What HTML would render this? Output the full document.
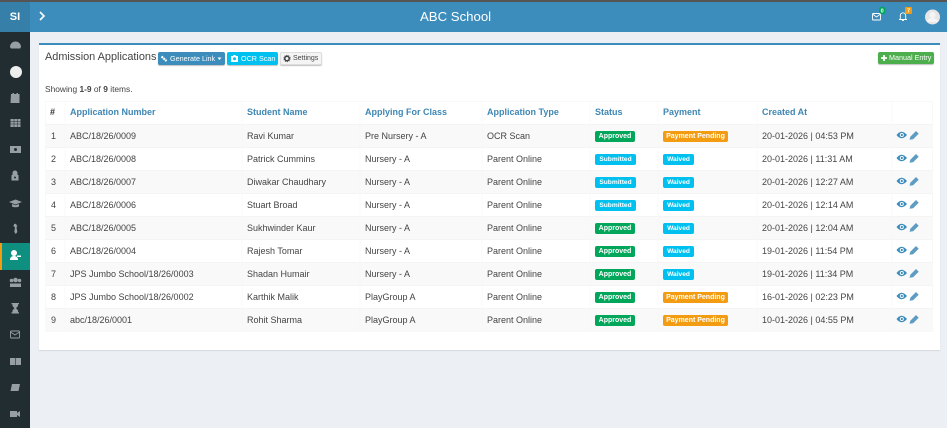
<!DOCTYPE html>
<html><head><meta charset="utf-8"><style>
*{box-sizing:border-box}
html,body{margin:0;padding:0;width:947px;height:428px;overflow:hidden;background:#ecf0f5;font-family:"Liberation Sans",sans-serif;color:#333}
#wrap{position:absolute;left:0;top:0;width:947px;height:428px;filter:blur(.3px)}
.abs{position:absolute}
#top{left:0;top:0;width:947px;height:2px;background:#555}
#logo{left:0;top:2px;width:30px;height:30px;background:#367fa9;color:#fff;font-weight:bold;font-size:11px;text-align:center;line-height:30px}
#hdr{left:30px;top:2px;width:917px;height:30px;background:#3c8dbc}
#title{left:420px;top:2px;color:#fff;font-size:13.2px;line-height:30px;white-space:nowrap}
#side{left:0;top:32px;width:30px;height:396px;background:#222d32}
#act{left:0;top:243px;width:30px;height:27px;background:#0e8f80;border-left:2px solid #f39c12}
#box{left:39px;top:43px;width:901px;height:307px;background:#fff;border-top:2px solid #3c8dbc;box-shadow:0 1px 1px rgba(0,0,0,.1)}
.t{position:absolute;white-space:nowrap}
.btn{position:absolute;top:52px;height:13px;border-radius:2px;color:#fff;box-shadow:0 1px 1px rgba(0,0,0,.25)}
.btn span{position:absolute;top:0;font-size:7.2px;line-height:13px;white-space:nowrap}
.btn svg{position:absolute;left:0;top:0}
.row{position:absolute;left:45px;width:888px;height:23px;border-top:1px solid #f4f4f4}
.row.o{background:#f9f9f9}
.c{position:absolute;top:0;font-size:9px;line-height:22px;white-space:nowrap;color:#444}
.h{position:absolute;top:107px;font-size:9px;font-weight:bold;color:#3f87b3;white-space:nowrap;line-height:11px}
.b{position:absolute;top:6px;height:11px;border-radius:2px;color:#fff;font-size:6.6px;font-weight:bold;text-align:center;line-height:11px;white-space:nowrap}
.g{background:#00a65a;left:550px;width:40px;font-size:7px}
.s{background:#00c0ef;left:550px;width:41px}
.w{background:#00c0ef;left:618px;width:31px}
.p{background:#f39c12;left:618px;width:65px;font-size:7px}
</style></head><body><div id="wrap">
<div class="abs" id="hdr"></div><div class="abs" id="top"></div>
<div class="abs" id="logo">SI</div>
<svg class="abs" style="left:38px;top:11px" width="8" height="10" viewBox="0 0 8 10"><path d="M2 1l4 4-4 4" fill="none" stroke="#fff" stroke-width="1.6"/></svg>
<div class="abs" id="title">ABC School</div>
<svg class="abs" style="left:860px;top:0" width="87" height="32" viewBox="860 0 87 32">
<rect x="872.500" y="13.500" width="8" height="6.500" rx=".8" fill="none" stroke="#fff" stroke-width=".9"/><path d="M872.500 14l4 3 4-3" fill="none" stroke="#fff" stroke-width=".8"/>
<rect x="879" y="7" width="6.500" height="7" rx="2.500" fill="#00a65a"/><text x="882.200" y="12.500" font-size="5.500" font-weight="bold" fill="#fff" text-anchor="middle" font-family="Liberation Sans">0</text>
<path d="M899 19.500h8M900.300 19V15.500a2.700 2.700 0 0 1 5.400 0V19M902 20.500h2" fill="none" stroke="#fff" stroke-width=".9"/>
<rect x="905" y="7" width="7" height="7" rx="1" fill="#f39c12"/><text x="908.500" y="12.500" font-size="5.500" font-weight="bold" fill="#fff" text-anchor="middle" font-family="Liberation Sans">7</text>
<circle cx="932.500" cy="17" r="7.500" fill="#e6e6e6"/><circle cx="932.500" cy="15" r="3" fill="#f5f5f5"/><path d="M927 22a5.500 4 0 0 1 11 0z" fill="#f5f5f5"/>
</svg>
<div class="abs" id="side"></div><div class="abs" id="act"></div>
<svg class="abs" style="left:0;top:0" width="30" height="428" viewBox="0 0 30 428" fill="#989fa3">
<path d="M10 47a5.500 5.500 0 0 1 11 0l-1 1.500h-9z"/>
<circle cx="16" cy="72" r="6" fill="#eee"/>
<path d="M11 94h1.500v-1h1.500v1h2.500v-1h1.500v1h1.500v9h-9z"/>
<path d="M10.500 119h10v8h-10z"/><path d="M10.500 121.500h10M10.500 124h10M14 119v8M17.500 119v8" stroke="#222d32" stroke-width=".5"/>
<rect x="10" y="146" width="11" height="7"/><circle cx="15.500" cy="149.500" r="1.500" fill="#222d32"/>
<path d="M12.500 175v-2a2.500 2.500 0 0 1 5 0v2h1v5.500h-7V175z"/><circle cx="15" cy="177.500" r="1" fill="#222d32"/>
<path d="M9 202l6.500-2.500L22 202l-6.500 2.500z"/><path d="M12 204v2.500q3.500 1.500 7 0V204l-3.500 1.300z"/>
<path d="M13 225.500h4.500l-1 2 .8 4.500-1.500 2-1.500-2 .7-4.500z"/><circle cx="15.200" cy="225" r="1.300"/>
<circle cx="14" cy="253" r="3" fill="#fff"/><path d="M10 260q0-4 4-4t4 4z" fill="#fff"/><path d="M17 255.500h4v1.500h-4z" fill="#fff"/>
<circle cx="15.500" cy="280" r="2.300"/><circle cx="11.500" cy="280.500" r="1.800"/><circle cx="19.500" cy="280.500" r="1.800"/><path d="M10 287v-3.500h11v3.500z"/>
<path d="M11.500 303h7.500v1.300h-1v1.700l-2 2.200 2 2.200v1.800h1v1.300h-7.500v-1.300h1v-1.800l2-2.200-2-2.200v-1.700h-1z"/>
<rect x="10.500" y="331" width="9" height="7" rx=".8" fill="none" stroke="#989fa3" stroke-width=".9"/><path d="M10.500 332l4.500 3 4.500-3" fill="none" stroke="#989fa3" stroke-width=".8"/>
<rect x="10" y="358" width="11" height="7"/><path d="M15.500 358v7" stroke="#222d32" stroke-width=".6"/>
<path d="M12 384h8l-1.500 7h-8z"/>
<rect x="10" y="411" width="7" height="6"/><path d="M17 413l3-2v6l-3-2z"/>
</svg>
<div class="abs" id="box"></div>
<div class="t" style="left:45px;top:50px;font-size:10.900px;line-height:14px;color:#444">Admission Applications</div>
<div class="btn" style="left:158px;width:67px;background:#3c8dbc"><svg width="67" height="13" viewBox="0 0 67 13"><path d="M3.500 4.500l5 4.500" stroke="#fff" stroke-width="2.200" stroke-dasharray="2 .6" fill="none"/><path d="M59.500 5.500h4l-2 2.500z" fill="#fff"/></svg><span style="left:12px">Generate Link</span></div>
<div class="btn" style="left:227px;width:51px;background:#00c0ef"><svg width="51" height="13" viewBox="0 0 51 13"><path d="M4 4h2l.7-1h1.600l.7 1h2v6H4z" fill="#fff"/><circle cx="7.500" cy="6.800" r="1.500" fill="#00c0ef"/></svg><span style="left:14px">OCR Scan</span></div>
<div class="btn" style="left:280px;width:42px;background:#f4f4f4;color:#444;border:1px solid #ddd"><svg width="40" height="11" viewBox="0 0 40 11"><circle cx="6" cy="5.500" r="2.200" fill="none" stroke="#444" stroke-width="1.500"/><circle cx="6" cy="5.500" r="3.200" fill="none" stroke="#444" stroke-width=".8" stroke-dasharray="1 1"/></svg><span style="left:12px;line-height:11px;font-size:7px">Settings</span></div>
<div class="btn" style="left:878px;width:56px;height:12px;background:#4cae4c"><svg width="56" height="12" viewBox="0 0 56 12"><path d="M6 3v6M3 6h6" stroke="#fff" stroke-width="1.800"/></svg><span style="left:11px;line-height:12px">Manual Entry</span></div>
<div class="t" style="left:45px;top:84px;font-size:8.400px;line-height:11px;color:#444">Showing <b>1-9</b> of <b>9</b> items.</div>
<div class="abs" style="left:45px;top:101px;width:888px;height:231px;border:1px solid #f8f8f8"></div>
<div class="h" style="left:50px;color:#333">#</div>
<div class="h" style="left:70px">Application Number</div>
<div class="h" style="left:247px">Student Name</div>
<div class="h" style="left:365px">Applying For Class</div>
<div class="h" style="left:487px">Application Type</div>
<div class="h" style="left:595px">Status</div>
<div class="h" style="left:663px">Payment</div>
<div class="h" style="left:762px">Created At</div>
<div class="row o" style="top:124px"><span class="c" style="left:6px">1</span><span class="c" style="left:25px">ABC/18/26/0009</span><span class="c" style="left:202px">Ravi Kumar</span><span class="c" style="left:320px">Pre Nursery - A</span><span class="c" style="left:442px">OCR Scan</span><span class="b g">Approved</span><span class="b p">Payment Pending</span><span class="c" style="left:717px">20-01-2026 | 04:53 PM</span></div>
<div class="row" style="top:147px"><span class="c" style="left:6px">2</span><span class="c" style="left:25px">ABC/18/26/0008</span><span class="c" style="left:202px">Patrick Cummins</span><span class="c" style="left:320px">Nursery - A</span><span class="c" style="left:442px">Parent Online</span><span class="b s">Submitted</span><span class="b w">Waived</span><span class="c" style="left:717px">20-01-2026 | 11:31 AM</span></div>
<div class="row o" style="top:170px"><span class="c" style="left:6px">3</span><span class="c" style="left:25px">ABC/18/26/0007</span><span class="c" style="left:202px">Diwakar Chaudhary</span><span class="c" style="left:320px">Nursery - A</span><span class="c" style="left:442px">Parent Online</span><span class="b s">Submitted</span><span class="b w">Waived</span><span class="c" style="left:717px">20-01-2026 | 12:27 AM</span></div>
<div class="row" style="top:193px"><span class="c" style="left:6px">4</span><span class="c" style="left:25px">ABC/18/26/0006</span><span class="c" style="left:202px">Stuart Broad</span><span class="c" style="left:320px">Nursery - A</span><span class="c" style="left:442px">Parent Online</span><span class="b s">Submitted</span><span class="b w">Waived</span><span class="c" style="left:717px">20-01-2026 | 12:14 AM</span></div>
<div class="row o" style="top:216px"><span class="c" style="left:6px">5</span><span class="c" style="left:25px">ABC/18/26/0005</span><span class="c" style="left:202px">Sukhwinder Kaur</span><span class="c" style="left:320px">Nursery - A</span><span class="c" style="left:442px">Parent Online</span><span class="b g">Approved</span><span class="b w">Waived</span><span class="c" style="left:717px">20-01-2026 | 12:04 AM</span></div>
<div class="row" style="top:239px"><span class="c" style="left:6px">6</span><span class="c" style="left:25px">ABC/18/26/0004</span><span class="c" style="left:202px">Rajesh Tomar</span><span class="c" style="left:320px">Nursery - A</span><span class="c" style="left:442px">Parent Online</span><span class="b g">Approved</span><span class="b w">Waived</span><span class="c" style="left:717px">19-01-2026 | 11:54 PM</span></div>
<div class="row o" style="top:262px"><span class="c" style="left:6px">7</span><span class="c" style="left:25px">JPS Jumbo School/18/26/0003</span><span class="c" style="left:202px">Shadan Humair</span><span class="c" style="left:320px">Nursery - A</span><span class="c" style="left:442px">Parent Online</span><span class="b g">Approved</span><span class="b w">Waived</span><span class="c" style="left:717px">19-01-2026 | 11:34 PM</span></div>
<div class="row" style="top:285px"><span class="c" style="left:6px">8</span><span class="c" style="left:25px">JPS Jumbo School/18/26/0002</span><span class="c" style="left:202px">Karthik Malik</span><span class="c" style="left:320px">PlayGroup A</span><span class="c" style="left:442px">Parent Online</span><span class="b g">Approved</span><span class="b p">Payment Pending</span><span class="c" style="left:717px">16-01-2026 | 02:23 PM</span></div>
<div class="row o" style="top:308px"><span class="c" style="left:6px">9</span><span class="c" style="left:25px">abc/18/26/0001</span><span class="c" style="left:202px">Rohit Sharma</span><span class="c" style="left:320px">PlayGroup A</span><span class="c" style="left:442px">Parent Online</span><span class="b g">Approved</span><span class="b p">Payment Pending</span><span class="c" style="left:717px">10-01-2026 | 04:55 PM</span></div>
<svg class="abs" style="left:45px;top:101px" width="888" height="231" viewBox="0 0 888 231">
<path d="M20 0v231M197 0v231M315 0v231M437 0v231M545 0v231M613 0v231M712 0v231M847 0v231" stroke="#f8f8f8" fill="none"/>
<defs><g id="ic"><path d="M851.500 34q5-6.500 10.500 0q-5.500 6.500-10.500 0z" fill="#3c8dbc"/><circle cx="856.800" cy="34" r="2" fill="#fff"/><circle cx="856.800" cy="34" r="1.100" fill="#3c8dbc"/><path d="M864.500 38.800l.9-3.200 5.600-5.600 2.700 2.700-5.600 5.600z" fill="#5f9cc4"/></g></defs>
<use href="#ic"/><use href="#ic" y="23"/><use href="#ic" y="46"/><use href="#ic" y="69"/><use href="#ic" y="92"/><use href="#ic" y="115"/><use href="#ic" y="138"/><use href="#ic" y="161"/><use href="#ic" y="184"/>
</svg>
</div></body></html>
